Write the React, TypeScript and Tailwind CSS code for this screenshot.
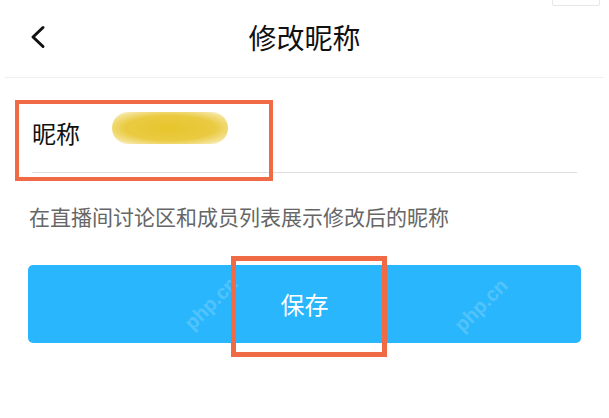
import React from "react";

const font = { fontFamily: '"Noto Sans CJK SC", "Noto Sans", sans-serif' };

function Watermark({ className }: { className: string }) {
  return (
    <span
      className={`absolute text-[20px] font-bold text-white/20 -rotate-45 pointer-events-none select-none leading-none ${className}`}
      style={{ fontFamily: '"Liberation Sans", sans-serif' }}
    >
      php.cn
    </span>
  );
}

export default function App() {
  return (
    <div className="relative w-[609px] h-[418px] bg-white overflow-hidden" style={font}>
      {/* top right artifact */}
      <div className="absolute left-[552px] top-[-4px] w-[48px] h-[10px] border border-gray-200 rounded-[2px]" />

      {/* header */}
      <div className="mx-[5px] h-[78px] border-b border-[#efefef] flex items-center px-[22px] pb-[4px]">
        <svg width="22" height="24" viewBox="0 0 22 24" className="shrink-0">
          <path d="M16 2.5 L6 12 L16 21.5" fill="none" stroke="#111" strokeWidth="3" strokeLinecap="round" strokeLinejoin="round" />
        </svg>
        <div className="flex-1 text-center text-[28px] text-[#111] leading-none pr-[22px]">修改昵称</div>
      </div>

      {/* input row */}
      <div className="mx-[32px] h-[95px] pt-[16px] border-b border-[#dedede] flex items-center">
        <span className="text-[24px] text-[#111] leading-none">昵称</span>
        <div className="ml-[32px] mb-[10px] w-[116px] h-[32px] rounded-full bg-[radial-gradient(ellipse_at_center,#e3bf15_0%,#e8c42c_55%,#f2df86_80%,#ffffff_100%)] opacity-90" />
      </div>

      {/* hint */}
      <div className="mx-[29px] mt-[33px] text-[21px] text-[#666] leading-none">
        在直播间讨论区和成员列表展示修改后的昵称
      </div>

      {/* button */}
      <div className="relative mx-[28px] mt-[38px] h-[78px] rounded-[5px] bg-[#29b6fc] flex items-center justify-center overflow-hidden">
        <span className="text-[24px] text-white leading-none">保存</span>
        <Watermark className="left-[150px] top-[28px]" />
        <Watermark className="left-[420px] top-[30px]" />
      </div>

      {/* annotation boxes */}
      <div className="absolute left-[15px] top-[100px] w-[258px] h-[81px] border-[4px] border-[#ef6a45]" />
      <div className="absolute left-[231px] top-[256px] w-[156px] h-[101px] border-[5px] border-[#ef6a45]" />
    </div>
  );
}
